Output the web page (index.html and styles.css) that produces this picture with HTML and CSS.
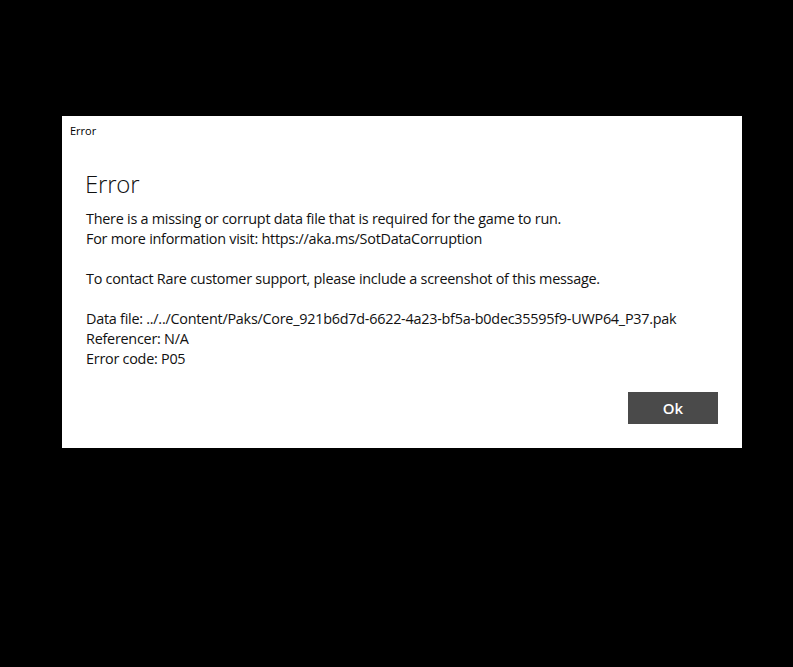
FILE: index.html
```html
<!DOCTYPE html>
<html>
<head>
<meta charset="utf-8">
<link rel="stylesheet" href="styles.css">
</head>
<body>
<div class="dialog">
  <div class="titlebar">Error</div>
  <div class="content">
    <h1 class="heading">Error</h1>
    <div class="message">
      <p>There is a missing or corrupt data file that is required for the game to run.<br>For more information visit: https://aka.ms/SotDataCorruption</p>
      <p>To contact Rare customer support, please include a screenshot of this message.</p>
      <p>Data file: ../../Content/Paks/Core_921b6d7d-6622-4a23-bf5a-b0dec35595f9-UWP64_P37.pak<br>Referencer: N/A<br>Error code: P05</p>
    </div>
    <div class="actions">
      <button class="ok">Ok</button>
    </div>
  </div>
</div>
</body>
</html>
```

FILE: styles.css
```css
html, body {
  margin: 0;
  padding: 0;
  background: #000;
  height: 100%;
}
body {
  font-family: "Open Sans", "Noto Sans", sans-serif;
  padding-top: 116px;
  padding-left: 62px;
  box-sizing: border-box;
}
.dialog {
  width: 680px;
  height: 332px;
  background: #fff;
  display: flex;
  flex-direction: column;
}
.titlebar {
  height: 30px;
  box-sizing: border-box;
  padding: 8px 8px;
  font-size: 11px;
  line-height: 14px;
  color: #000;
}
.content {
  padding: 22px 24px 24px 23px;
  display: flex;
  flex-direction: column;
}
.heading {
  margin: 0;
  font-weight: 300;
  font-size: 24px;
  line-height: 32px;
  color: #111;
  letter-spacing: -0.2px;
}
.message {
  margin-top: 9px;
  padding-left: 1px;
  font-size: 14.4px;
  line-height: 20px;
  color: #111;
  letter-spacing: -0.25px;
}
.message p {
  margin: 0 0 20px 0;
}
.message p:last-child {
  margin-bottom: 0;
}
.actions {
  margin-top: 23px;
  display: flex;
  justify-content: flex-end;
}
.ok {
  width: 90px;
  height: 32px;
  border: none;
  background: #4a4a4a;
  color: #fff;
  font-family: "Open Sans", "Noto Sans", sans-serif;
  font-size: 15px;
  font-weight: 600;
  padding: 0;
}
```
